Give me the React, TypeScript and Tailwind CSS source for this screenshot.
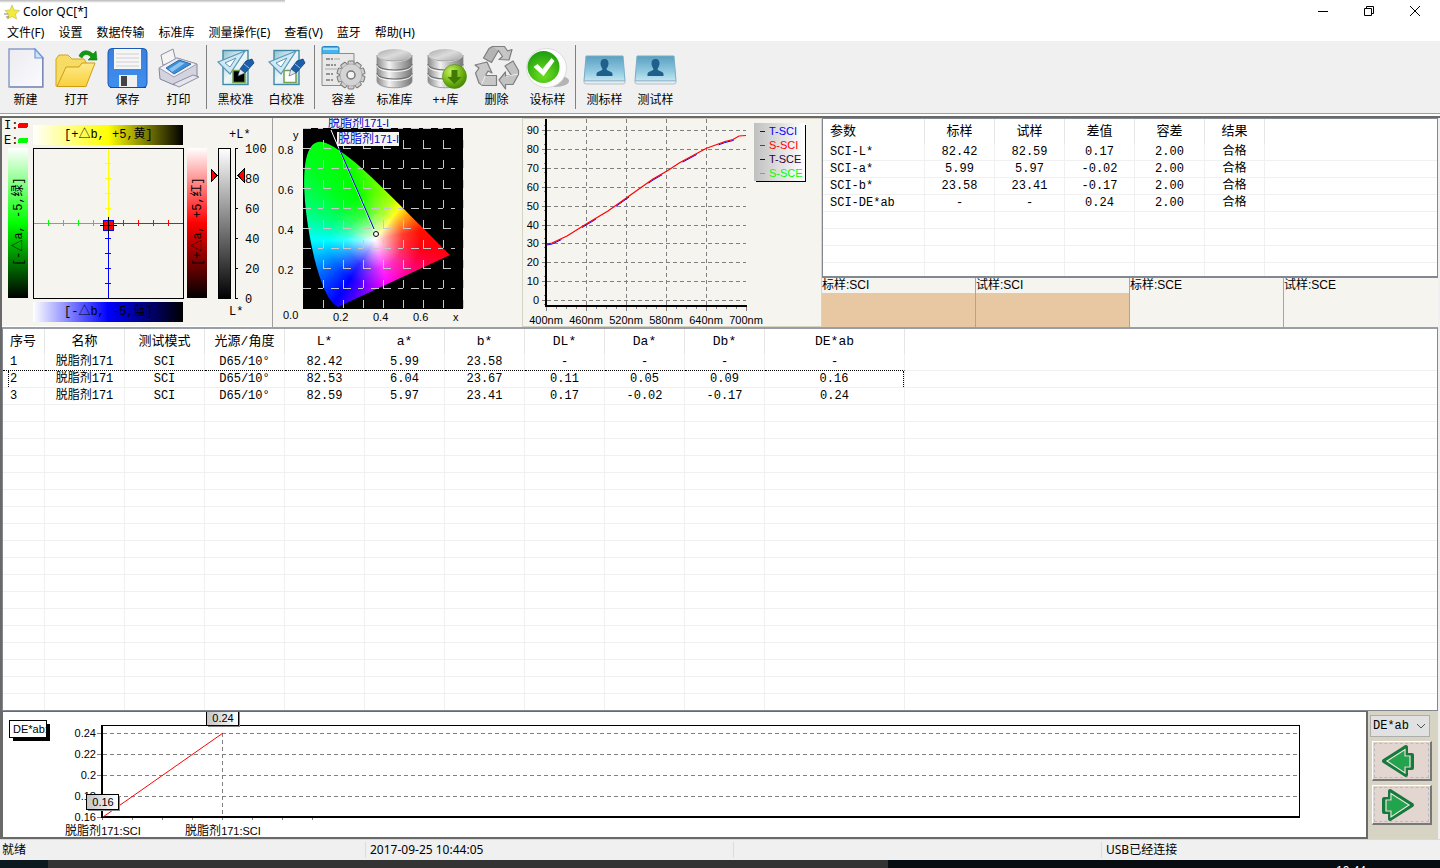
import { useState } from "react";
import type { ReactNode } from "react";

const MENU = ["文件(F)", "设置", "数据传输", "标准库", "测量操作(E)", "查看(V)", "蓝牙", "帮助(H)"];

const PARAM_HEAD = ["参数", "标样", "试样", "差值", "容差", "结果"];
const PARAM_ROWS = [
  ["SCI-L*", "82.42", "82.59", "0.17", "2.00", "合格"],
  ["SCI-a*", "5.99", "5.97", "-0.02", "2.00", "合格"],
  ["SCI-b*", "23.58", "23.41", "-0.17", "2.00", "合格"],
  ["SCI-DE*ab", "-", "-", "0.24", "2.00", "合格"],
];

const DATA_HEAD = ["序号", "名称", "测试模式", "光源/角度", "L*", "a*", "b*", "DL*", "Da*", "Db*", "DE*ab"];
const DATA_ROWS = [
  ["1", "脱脂剂171", "SCI", "D65/10°", "82.42", "5.99", "23.58", "-", "-", "-", "-"],
  ["2", "脱脂剂171", "SCI", "D65/10°", "82.53", "6.04", "23.67", "0.11", "0.05", "0.09", "0.16"],
  ["3", "脱脂剂171", "SCI", "D65/10°", "82.59", "5.97", "23.41", "0.17", "-0.02", "-0.17", "0.24"],
];

// CIE 1931 spectral locus, 380nm to 700nm
const LOCUS = [
  [0.1741, 0.005], [0.1644, 0.0109], [0.144, 0.0297], [0.1241, 0.0578], [0.1096, 0.0868], [0.0913, 0.1327],
  [0.0687, 0.2007], [0.0454, 0.295], [0.0235, 0.4127], [0.0082, 0.5384], [0.0039, 0.6548], [0.0139, 0.7502],
  [0.0389, 0.812], [0.0743, 0.8338], [0.1142, 0.8262], [0.1547, 0.8059], [0.2296, 0.7543], [0.3016, 0.6923],
  [0.3731, 0.6245], [0.4441, 0.5547], [0.5125, 0.4866], [0.5752, 0.4242], [0.627, 0.3725], [0.6915, 0.3083],
  [0.7347, 0.2653],
];

/* ---------- toolbar icons ---------- */

function Icon({ children }: { children: ReactNode }) {
  return (
    <svg viewBox="0 0 48 48" className="size-12 shrink-0" aria-hidden="true">
      {children}
    </svg>
  );
}

function IconDefs() {
  return (
    <svg className="absolute size-0" aria-hidden="true">
      <defs>
        <linearGradient id="paper" x1="0" y1="0" x2="1" y2="1">
          <stop offset="0" stopColor="#ececf0" />
          <stop offset="1" stopColor="#fafaff" />
        </linearGradient>
        <linearGradient id="folder" x1="0" y1="0" x2="0" y2="1">
          <stop offset="0" stopColor="#fdeb8c" />
          <stop offset="1" stopColor="#f9d03c" />
        </linearGradient>
        <linearGradient id="metal" x1="0" y1="0" x2="1" y2="0">
          <stop offset="0" stopColor="#8c8c8c" />
          <stop offset="0.35" stopColor="#f2f2f2" />
          <stop offset="0.6" stopColor="#bdbdbd" />
          <stop offset="1" stopColor="#777" />
        </linearGradient>
        <linearGradient id="lid" x1="0" y1="0" x2="1" y2="1">
          <stop offset="0" stopColor="#a8a8a8" />
          <stop offset="0.5" stopColor="#dcdcdc" />
          <stop offset="1" stopColor="#a0a0a0" />
        </linearGradient>
        <linearGradient id="sheet" x1="0" y1="0" x2="1" y2="1">
          <stop offset="0" stopColor="#8fc0d2" />
          <stop offset="0.5" stopColor="#eef7fa" />
          <stop offset="1" stopColor="#b4d8e2" />
        </linearGradient>
        <linearGradient id="card" x1="0" y1="0" x2="0" y2="1">
          <stop offset="0" stopColor="#5a9fc0" />
          <stop offset="0.6" stopColor="#8fc8e0" />
          <stop offset="1" stopColor="#c2e6f2" />
        </linearGradient>
        <radialGradient id="green" cx="0.5" cy="0.75" r="0.7">
          <stop offset="0" stopColor="#6fe020" />
          <stop offset="1" stopColor="#22a010" />
        </radialGradient>
        <radialGradient id="olive" cx="0.35" cy="0.3" r="0.8">
          <stop offset="0" stopColor="#c8f060" />
          <stop offset="0.6" stopColor="#6cb010" />
          <stop offset="1" stopColor="#3c7a04" />
        </radialGradient>
        <linearGradient id="disk" x1="0" y1="0" x2="0" y2="1">
          <stop offset="0" stopColor="#3a7fdc" />
          <stop offset="1" stopColor="#3f8ff0" />
        </linearGradient>
      </defs>
    </svg>
  );
}

function NewIcon() {
  return (
    <Icon>
      <path d="M7 5h26l8 9v29H7z" fill="url(#paper)" stroke="#8c9cc8" strokeWidth="1.5" />
      <path d="M33 5v9h8z" fill="#cfe4fb" stroke="#6f9ad8" strokeWidth="1.2" />
      <path d="M40.500 14v29H8" fill="none" stroke="#7d86b4" strokeWidth="1" />
    </Icon>
  );
}

function OpenIcon() {
  return (
    <Icon>
      <path d="M3 42V15l3-4h9l4 4h12l2 3v24z" fill="#f7dc64" stroke="#d3a21c" strokeWidth="1" />
      <path d="M4 42.500 13 23h13l3-4h13L33 42.500z" fill="url(#folder)" stroke="#cf9c14" strokeWidth="1" />
      <path d="M26 12c2-6 9-7 14-2l3-3 1 9h-9l3-3c-4-4-7-3-9 1z" fill="#109a10" stroke="#0a7a0a" strokeWidth="0.6" />
    </Icon>
  );
}

function SaveIcon() {
  return (
    <Icon>
      <rect x="4" y="4.500" width="39" height="39" rx="4" fill="url(#disk)" stroke="#1d58b4" />
      <rect x="10" y="5" width="27" height="20" fill="#f6f6f6" />
      <path d="M12 10h23M12 14h23M12 18h23M12 22h23" stroke="#c8c8c8" strokeWidth="0.8" />
      <rect x="15" y="31" width="18" height="12" fill="#f0f0f0" />
      <rect x="17" y="32" width="6" height="10" fill="#444" />
      <path d="M6 43.500h36" stroke="#174a9c" />
    </Icon>
  );
}

function PrintIcon() {
  return (
    <Icon>
      <path d="M6 11 18 5l3 12-13 4z" fill="#f4f4f6" stroke="#8e8e96" />
      <path d="M4 24 22 14l20 6v12L19 41 5 35z" fill="#d4d4e0" stroke="#84849a" />
      <path d="M4 24 22 14l20 6-23 13z" fill="#f0f0f6" stroke="#9c9cac" />
      <path d="m11 24 13-8 12 4-17 10z" fill="#3f8fd8" stroke="#2c6cac" />
      <path d="m14 25 11-7 5 1-13 9z" fill="#8cc4f0" />
      <path d="m18 40 20-9 6 2-20 10z" fill="#e6e6ee" stroke="#8e8ea0" />
    </Icon>
  );
}

function CalibrateIcon({ fill }: { fill: string }) {
  return (
    <Icon>
      <rect x="11" y="6.500" width="25" height="34" fill="url(#sheet)" stroke="#3f8aa4" strokeWidth="1.4" />
      <path d="M6 18 33 7 18 30z" fill="#cfe8f4" stroke="#5a98b8" strokeWidth="1.2" />
      <path d="m13 19 11-5-6 9z" fill="#fff" stroke="#5a98b8" strokeWidth="1" />
      <rect x="21" y="26.500" width="12" height="12" fill={fill} stroke="#76a04c" strokeWidth="1.5" />
      <path d="m34 17 6-2 2 4-9 10-5-4z" fill="#1c5ea8" stroke="#123f78" strokeWidth="0.8" />
      <path d="m28 25 5 4-7 3z" fill="#e8e8e8" stroke="#2a5a90" strokeWidth="0.6" />
      <path d="m32 20 5 4" stroke="#8cc0e8" />
    </Icon>
  );
}

const TEETH = [0, 36, 72, 108, 144, 180, 216, 252, 288, 324];

function ToleranceIcon() {
  return (
    <Icon>
      <rect x="2" y="2.500" width="17" height="9" rx="1.500" fill="#45b4ec" stroke="#2688c0" />
      <rect x="3" y="4" width="15" height="2" fill="#a4e0fb" />
      <path d="M2 9.500h32v32H2z" fill="#e8e8e8" stroke="#8c8c8c" />
      <path d="M6 15h8M6 21h10M6 30h8M6 36h8" stroke="#777" strokeWidth="1.500" strokeDasharray="4 1 2 1" />
      <path d="M14 15h6M5 25h12" stroke="#aaa" />
      {TEETH.map((a) => (
        <rect key={a} x="28" y="17" width="6" height="6" rx="1" fill="#cfcfcf" stroke="#777" transform={`rotate(${a} 31 31)`} />
      ))}
      <circle cx="31" cy="31" r="11" fill="#d4d4d4" stroke="#999" strokeWidth="0.6" />
      <circle cx="31" cy="31" r="4" fill="#f4f4f4" stroke="#777" strokeWidth="1.500" />
    </Icon>
  );
}

function Cylinder() {
  return (
    <>
      <path d="M6 11v26c0 9 35 9 35 0V11z" fill="url(#metal)" stroke="#8a8a8a" strokeWidth="0.8" />
      <path d="M6 20c0 8 35 8 35 0M6 29c0 8 35 8 35 0" fill="none" stroke="#6e6e6e" strokeWidth="1.200" />
      <path d="M6 21.500c0 8 35 8 35 0M6 30.500c0 8 35 8 35 0" fill="none" stroke="#fff" strokeWidth="0.9" />
      <ellipse cx="23.500" cy="11" rx="17.500" ry="6.500" fill="url(#lid)" stroke="#f6f6f6" />
      <path d="M6 11c0 8 35 8 35 0" fill="none" stroke="#888" strokeWidth="0.7" />
    </>
  );
}

function LibraryIcon() {
  return (
    <Icon>
      <Cylinder />
    </Icon>
  );
}

function LibraryAddIcon() {
  return (
    <Icon>
      <Cylinder />
      <circle cx="32.500" cy="32.500" r="12" fill="url(#olive)" stroke="#4c8a08" strokeWidth="0.6" />
      <path d="M29.500 26h6v7h4l-7 7-7-7h4z" fill="#3f7a04" />
    </Icon>
  );
}

function RecycleIcon() {
  return (
    <Icon>
      {/* top arrow folds over and points down to the right */}
      <path d="M10.500 14 16 4.500 19.500 2.500h12L34.500 7l4.500-1.500L36 16l-10-.5 3.500-3-4-6-7 12z" fill="#c6c6c6" />
      <path d="M19.500 2.500 25.500 6.500 18.500 18.500 10.500 14 16 4.500z" fill="#b4b4b4" />
      <path
        d="M10.500 14 16 4.500 19.500 2.500h12L34.500 7l4.500-1.500L36 16l-10-.5 3.500-3-4-6-7 12z"
        fill="none"
        stroke="#7e7e7e"
        strokeWidth="1.200"
        strokeLinejoin="round"
      />
      {/* right arrow points left along the bottom */}
      <path
        d="m32 22 8-5 5.500 9.500v4L40 40.500h-7.500V45L26 36l6.500-8v4l6-.5z"
        fill="#c2c2c2"
        stroke="#7e7e7e"
        strokeWidth="1.200"
        strokeLinejoin="round"
      />
      <path d="M45 30 38 31.500l-5 1" stroke="#eee" />
      {/* left arrow rises from the bottom bar */}
      <path
        d="M23.500 31.500v10H9.500L6 39 2.500 29l3.500-5-4-3 12-3 5 11-4-2-2.500 4.500z"
        fill="#c8c8c8"
        stroke="#7e7e7e"
        strokeWidth="1.200"
        strokeLinejoin="round"
      />
      <path d="m12.500 31.500-4 9" stroke="#eee" />
    </Icon>
  );
}

function CheckIcon() {
  return (
    <Icon>
      <ellipse cx="31" cy="37" rx="14" ry="6" fill="#b4b4b4" />
      <ellipse cx="22.500" cy="24" rx="20" ry="19.500" fill="#fdfdfd" stroke="#dcdcdc" />
      <circle cx="19.500" cy="23" r="16" fill="url(#green)" />
      <path d="m9.500 23 4-3 5 5 9-11 3 3-11 15z" fill="#fff" />
    </Icon>
  );
}

function MeasureIcon() {
  return (
    <Icon>
      <path d="M5 12h37l2 25H3z" fill="url(#card)" stroke="#78aec6" />
      <path d="M3 37h41v2l-2 1H5l-2-1z" fill="#e4eef2" stroke="#a4b4bc" strokeWidth="0.8" />
      <path
        d="M23.500 15c3 0 4 2 4 4.500S26 24 25.500 25c0 2 6 2 6 5v2h-16v-2c0-3 6-3 6-5-.500-1-2-3-2-5.500s1-4.500 4-4.500z"
        fill="#1f5f8c"
      />
    </Icon>
  );
}

const TOOL_GROUPS = [
  [
    { label: "新建", icon: <NewIcon /> },
    { label: "打开", icon: <OpenIcon /> },
    { label: "保存", icon: <SaveIcon /> },
    { label: "打印", icon: <PrintIcon /> },
  ],
  [
    { label: "黑校准", icon: <CalibrateIcon fill="#000" /> },
    { label: "白校准", icon: <CalibrateIcon fill="#fff" /> },
  ],
  [
    { label: "容差", icon: <ToleranceIcon /> },
    { label: "标准库", icon: <LibraryIcon /> },
    { label: "++库", icon: <LibraryAddIcon /> },
    { label: "删除", icon: <RecycleIcon /> },
    { label: "设标样", icon: <CheckIcon /> },
  ],
  [
    { label: "测标样", icon: <MeasureIcon /> },
    { label: "测试样", icon: <MeasureIcon /> },
  ],
];

/* ---------- window chrome ---------- */

function TitleBar() {
  return (
    <header className="flex h-[22px] shrink-0 items-center justify-between bg-white">
      <div className="flex items-center gap-[3px] pt-px pl-1">
        <svg viewBox="0 0 16 16" className="size-4" aria-hidden="true">
          <path d="m8 1 2 5 5.500.500-4 3.500 1 5L8 12.500 3.500 15l1-5L1 6.500 6 6z" fill="#f2ea3c" stroke="#b8b850" strokeWidth="0.6" />
          <path d="M0 10h4M2 13h3" stroke="#666" strokeWidth="0.8" />
        </svg>
        <h1 className="text-[12px] leading-4 font-['Noto_Sans',sans-serif]">Color QC[*]</h1>
      </div>
      <div className="flex h-5">
        <button aria-label="Minimize" className="flex w-[46px] items-center justify-center">
          <svg width="10" height="10" aria-hidden="true"><path d="M0 5.500h10" stroke="#000" /></svg>
        </button>
        <button aria-label="Restore" className="flex w-[46px] items-center justify-center">
          <svg width="10" height="10" fill="none" stroke="#000" aria-hidden="true">
            <path d="M.5 2.500h7v7h-7zM2.500 2.500v-2h7v7h-2" />
          </svg>
        </button>
        <button aria-label="Close" className="mr-[2px] flex w-[46px] items-center justify-center">
          <svg width="10" height="10" aria-hidden="true"><path d="m0 0 10 10M10 0 0 10" stroke="#000" /></svg>
        </button>
      </div>
    </header>
  );
}

function Toolbar() {
  return (
    <div className="flex h-[72px] shrink-0 bg-[#f0f0f0] pt-[3px]">
      {TOOL_GROUPS.map((group, i) => (
        <div key={i} className="flex">
          {i > 0 && <div className="mt-px mr-[3px] ml-[2px] h-16 w-px bg-[#808080]" />}
          {group.map((t) => (
            <button key={t.label} className="flex w-[51px] flex-col items-center text-[12px] leading-4 whitespace-nowrap">
              {t.icon}
              {t.label}
            </button>
          ))}
        </div>
      ))}
    </div>
  );
}

/* ---------- plots ---------- */

const MONO = "font-['Liberation_Mono','Noto_Sans_CJK_SC',monospace]";

function LabPlot() {
  return (
    <svg viewBox="2 118 270 209" className={`h-[209px] w-[270px] text-[12px] ${MONO}`} shapeRendering="crispEdges">
      <defs>
        {[
          ["gy", "#ff0"],
          ["gb", "#00f"],
          ["gg", "#0f0"],
          ["gr", "#f00"],
        ].map(([id, c]) => {
          const v = id === "gg" || id === "gr";
          return (
            <linearGradient key={id} id={id} x1="0" y1="0" x2={v ? 0 : 1} y2={v ? 1 : 0}>
              <stop offset="0" stopColor="#fff" />
              <stop offset="0.5" stopColor={c} />
              <stop offset="1" stopColor="#000" />
            </linearGradient>
          );
        })}
        <linearGradient id="gl" x1="0" y1="0" x2="0" y2="1">
          <stop offset="0" stopColor="#fff" />
          <stop offset="1" stopColor="#000" />
        </linearGradient>
      </defs>
      <text x="4" y="129">I:</text>
      <text x="4" y="144">E:</text>
      <rect x="18" y="123" width="10" height="5" rx="2" fill="#f00" />
      <rect x="18" y="138" width="10" height="5" rx="2" fill="#0f0" />
      <rect x="33" y="125" width="150" height="20" fill="url(#gy)" />
      <rect x="33" y="302" width="150" height="20" fill="url(#gb)" />
      <rect x="8" y="148" width="20" height="150" fill="url(#gg)" />
      <rect x="187" y="148" width="20" height="150" fill="url(#gr)" />
      <text x="64" y="138">[+△b, +5,黄]</text>
      <text x="64" y="315">[-△b, -5,蓝]</text>
      <text transform="translate(22 266) rotate(-90)">[-△a, -5,绿]</text>
      <text transform="translate(201 266) rotate(-90)">[+△a, +5,红]</text>
      <rect x="33.5" y="148.5" width="150" height="150" fill="none" stroke="#000" />
      <path d="M108.500 149v74M105 163.500h6M105 178.500h6M105 193.500h6M105 208.500h6" stroke="#ff0" />
      <path d="M108.500 223v75M105 238.500h6M105 253.500h6M105 268.500h6M105 283.500h6" stroke="#00f" />
      <path d="M34 223.500h74M48.500 220v6M63.500 220v6M78.500 220v6M93.500 220v6" stroke="#0f0" />
      <path d="M109 223.500h74M123.500 220v6M138.500 220v6M153.500 220v6M168.500 220v6" stroke="#f00" />
      <rect x="103.500" y="220.500" width="10" height="10" fill="#f00" stroke="#00f" />
      <path d="M100 225.500h17M108.500 217v17" stroke="#000" />
      <rect x="218.500" y="148.500" width="12" height="150" fill="url(#gl)" stroke="#000" />
      <path d="M238 148.500h-3v150h3M235 178.500h3M235 208.500h3M235 238.500h3M235 268.500h3" fill="none" stroke="#000" />
      <path d="m211 169 6 6.500-6 6.500zM244 169l-6 6.500 6 6.500z" fill="#f00" stroke="#000" />
      <text x="229" y="138">+L*</text>
      <text x="229" y="315">L*</text>
      {[100, 80, 60, 40, 20, 0].map((n, i) => (
        <text key={n} x="245" y={153 + i * 30}>{n}</text>
      ))}
    </svg>
  );
}

// quadratic curve through the midpoints keeps the tongue round
function locusPath() {
  const pts = LOCUS.map(([x, y]) => [303 + 200 * x, 308 - 200 * y]);
  let d = `M${pts[0][0]} ${pts[0][1]}`;
  for (let i = 1; i < pts.length - 1; i++) {
    const [x, y] = pts[i];
    const [nx, ny] = pts[i + 1];
    d += ` Q${x} ${y} ${(x + nx) / 2} ${(y + ny) / 2}`;
  }
  const last = pts[pts.length - 1];
  return `${d} L${last[0]} ${last[1]} Z`;
}

function ChromaticityPlot() {
  return (
    <svg viewBox="272 118 250 209" className="h-[209px] w-[250px] text-[11px]">
      <defs>
        <clipPath id="locus">
          <path d={locusPath()} />
        </clipPath>
      </defs>
      <rect x="303" y="128" width="160" height="181" fill="#000" />
      <g clipPath="url(#locus)">
        <foreignObject x="303" y="128" width="160" height="181">
          <div className="h-full w-full bg-[radial-gradient(circle_at_72px_112px,#ffffff_0px,#ffffff90_14px,#ffffff30_28px,#ffffff00_46px),conic-gradient(from_0deg_at_72px_112px,#60ff00_0deg,#a0ff00_20deg,#ffff00_37deg,#ff9000_54deg,#ff1000_78deg,#ff0010_100deg,#ff0080_130deg,#ff00ff_165deg,#8000ff_190deg,#0000ff_213deg,#0070ff_240deg,#00ffff_270deg,#00ff80_292deg,#00ff20_318deg,#00ff00_338deg,#60ff00_360deg)]" />
        </foreignObject>
      </g>
      <g stroke="#c8c8c8" shapeRendering="crispEdges">
        {[323, 343, 363, 383, 403, 423, 443, 463].map((x) => (
          <path key={x} d={`M${x}.5 128v183`} strokeDasharray="8 12" strokeDashoffset="8" />
        ))}
        {[128, 148, 168, 188, 208, 228, 248, 268, 288].map((y, i) => (
          <path key={y} d={`M303 ${y}.5h152`} strokeDasharray={i % 2 ? "8 12" : "8 7 5 8 8 4"} />
        ))}
      </g>
      <path d="M303 308.500h160" stroke="#000" shapeRendering="crispEdges" />
      <path d="M331 130 375 233" stroke="#fff" />
      <path d="M339 148 374 229" stroke="#0000c8" />
      <circle cx="376" cy="234" r="2.500" fill="#fff" stroke="#000" />
      <text x="328" y="127" fill="#00c"><tspan className="text-[12px]">脱脂剂</tspan>171-I</text>
      <rect x="337" y="132" width="62" height="14" fill="#f5f4ef" />
      <text x="338" y="143" fill="#00c"><tspan className="text-[12px]">脱脂剂</tspan>171-I</text>
      <text x="293" y="139">y</text>
      {["0.8", "0.6", "0.4", "0.2"].map((t, i) => (
        <text key={t} x="278" y={154 + i * 40}>{t}</text>
      ))}
      <text x="283" y="319">0.0</text>
      {["0.2", "0.4", "0.6"].map((t, i) => (
        <text key={t} x={333 + i * 40} y="321">{t}</text>
      ))}
      <text x="453" y="321">x</text>
    </svg>
  );
}

const LEGEND = [
  ["T-SCI", "#0000ff"],
  ["S-SCI", "#ff0000"],
  ["T-SCE", "#300040"],
  ["S-SCE", "#00ff00"],
];

function SpectrumPlot() {
  const curve = "546.500,244 552,243 567,236 587,223.500 608,211 627,197.500 653,179 667,171 680,162.500 706,148.500 725,141.500 733,139.500 739,136 746,135.500";
  return (
    <svg viewBox="522 118 300 209" className="h-[209px] w-[300px] text-[11px]">
      <defs>
        <linearGradient id="legend">
          <stop offset="0" stopColor="#c0c0c0" />
          <stop offset="1" stopColor="#fff" />
        </linearGradient>
      </defs>
      <g stroke="#808080" shapeRendering="crispEdges">
        {[90, 80, 70, 60, 50, 40, 30, 20, 10, 0].map((n, i) => {
          const y = Math.round(130 + i * 18.9);
          return (
            <g key={n}>
              <path d={`M547 ${y}.5h199`} strokeDasharray="4 3" />
              <path d={`M542 ${y}.5h4M544 ${y + 4}.5h2M544 ${y - 5}.5h2`} />
            </g>
          );
        })}
        {[586, 626, 666, 706].map((x) => (
          <path key={x} d={`M${x}.5 119v187`} strokeDasharray="4 3" />
        ))}
        {Array.from({ length: 21 }, (_, i) => (
          <path key={i} d={`M${546 + i * 10}.5 307v${i % 4 ? 2 : 4}`} />
        ))}
      </g>
      <path d="M546 119v188M545 306h202" stroke="#000" strokeWidth="2" shapeRendering="crispEdges" />
      <polyline points={curve} fill="none" stroke="#00f" transform="translate(0 1)" strokeDasharray="16 24" />
      <polyline points={curve} fill="none" stroke="#f00" strokeWidth="1.200" />
      {[90, 80, 70, 60, 50, 40, 30, 20, 10, 0].map((n, i) => (
        <text key={n} x="539" y={Math.round(134 + i * 18.9)} textAnchor="end">{n}</text>
      ))}
      {[400, 460, 520, 580, 640, 700].map((n, i) => (
        <text key={n} x={546 + i * 40} y="324" textAnchor="middle">{n}nm</text>
      ))}
      <rect x="756" y="125" width="50" height="57" fill="#000" />
      <rect x="754" y="123" width="51" height="58" fill="url(#legend)" />
      {LEGEND.map(([t, c], i) => (
        <g key={t} fill={c}>
          <rect x="760" y={131 + i * 14} width="5" height="1" />
          <text x="769" y={135 + i * 14}>{t}</text>
        </g>
      ))}
    </svg>
  );
}

function TrendPlot() {
  return (
    <svg className="block h-full w-full text-[11px]">
      <defs>
        <linearGradient id="tag">
          <stop offset="0" stopColor="#c4c4c4" />
          <stop offset="1" stopColor="#fff" />
        </linearGradient>
      </defs>
      <rect x="9" y="12" width="37" height="17" fill="#000" />
      <rect x="5.500" y="8.500" width="37" height="17" fill="#fff" stroke="#000" />
      <text x="9" y="21">DE*ab:</text>

      {/* plot area, stretches with the window */}
      <svg x="97" y="12" height="94" className="w-[calc(100%-163px)]" shapeRendering="crispEdges">
        <path d="M121.500 9v84" stroke="#808080" strokeDasharray="4 3" />
        {[9, 30, 51, 72].map((y) => (
          <line key={y} x1="2" x2="100%" y1={y + 0.5} y2={y + 0.5} stroke="#808080" strokeDasharray="4 3" />
        ))}
        <line x1="0" x2="100%" y1="1.500" y2="1.500" stroke="#000" />
        <line x1="0" x2="100%" y1="93" y2="93" stroke="#000" strokeWidth="2" />
        <line x1="100%" x2="100%" y1="1" y2="94" stroke="#000" strokeWidth="2" />
        <line x1="1" x2="1" y1="1" y2="94" stroke="#000" strokeWidth="2" />
      </svg>
      <g stroke="#808080" shapeRendering="crispEdges">
        {[21, 42, 63, 84, 105].map((y) => (
          <path key={y} d={`M93 ${y}.5h4`} />
        ))}
        {[0, 1, 2, 3, 4, 5, 6, 7].map((i) => (
          <path key={i} d={`M${98 + i * 30}.5 106v2`} />
        ))}
      </g>
      <path d="m99 105 120-84" stroke="#f00" />
      {["0.24", "0.22", "0.2", "0.18", "0.16"].map((t, i) => (
        <text key={t} x="92" y={25 + i * 21} textAnchor="end">{t}</text>
      ))}
      {[
        { x: 82, y: 82, t: "0.16" },
        { x: 202, y: -2, t: "0.24" },
      ].map((m) => (
        <g key={m.t} transform={`translate(${m.x} ${m.y})`}>
          <rect x="2" y="2" width="32" height="15" fill="#888" />
          <rect x="0.500" y="0.500" width="32" height="15" fill="url(#tag)" stroke="#000" />
          <text x="17" y="12" textAnchor="middle">{m.t}</text>
        </g>
      ))}
      {[99, 219].map((x) => (
        <text key={x} x={x} y="123" textAnchor="middle"><tspan className="text-[12px]">脱脂剂</tspan>171:SCI</text>
      ))}
    </svg>
  );
}

/* ---------- tables ---------- */

type GridProps = {
  label: string;
  head: string[];
  rows: string[][];
  widths: number[];
  blank: number;
  selected?: number;
};

function Grid({ label, head, rows, widths, blank, selected = -1 }: GridProps) {
  const all = [...rows, ...Array.from({ length: blank }, () => head.map(() => ""))];
  return (
    <table aria-label={label} className={`w-full table-fixed border-separate border-spacing-0 text-[12px] ${MONO}`}>
      <colgroup>
        {widths.map((w, i) => (
          <col key={i} style={{ width: w }} />
        ))}
        <col />
      </colgroup>
      <thead>
        <tr className="h-[25px] text-[13px]">
          {head.map((h, i) => (
            <th key={h} className={`border-r border-[#e5e5e5] p-0 font-normal leading-4 ${i === 0 ? "pl-[7px] text-left" : "text-center"}`}>
              {h}
            </th>
          ))}
          <td />
        </tr>
      </thead>
      <tbody>
        {all.map((row, r) => (
          <tr key={r} className="h-[17px]">
            {row.map((cell, c) => (
              <td
                key={c}
                className={`border-r border-b border-r-[#f0f0f0] p-0 leading-4 whitespace-nowrap ${c === 0 ? "pl-[5px] text-left" : "text-center"} ${
                  r === selected - 1 ? "[border-bottom-style:dotted] border-b-black" : "border-b-[#f0f0f0]"
                }`}
              >
                {c === 0 ? (
                  <div className={`h-4 border-l border-dotted pl-px ${r === selected ? "border-black" : "border-transparent"}`}>{cell}</div>
                ) : r === selected && c === head.length - 1 ? (
                  <div className="h-4 border-r border-dotted border-black">{cell}</div>
                ) : (
                  cell
                )}
              </td>
            ))}
            <td className="border-b border-[#f0f0f0]" />
          </tr>
        ))}
      </tbody>
    </table>
  );
}

const SWATCHES = [
  { label: "标样:SCI", fill: "bg-[#e8c8a2]" },
  { label: "试样:SCI", fill: "bg-[#e8c8a2]" },
  { label: "标样:SCE", fill: "bg-[#f5f4ef]" },
  { label: "试样:SCE", fill: "bg-[#f5f4ef]" },
];

function ArrowButton({ label, flip }: { label: string; flip?: boolean }) {
  return (
    <button
      aria-label={label}
      className="ml-[2px] h-10 w-[60px] border-t border-r-2 border-b-2 border-l border-t-white border-r-[#777] border-b-[#777] border-l-white bg-[#e3d6d0] p-px"
    >
      <span className="flex h-full items-center border border-dashed border-[#bbb] pl-1.5">
        <svg width="34" height="34" viewBox="0 0 34 34" className={flip ? "-scale-x-100" : ""} aria-hidden="true">
          <path d="M3 17 25 3v8h6v13h-6v7z" fill="#22a44c" stroke="#157a3c" strokeWidth="4" strokeLinejoin="round" />
          <path d="M6 17 24 5.500V12h5v11h-5v6z" fill="none" stroke="#f0e8e0" strokeWidth="1.200" />
        </svg>
      </span>
    </button>
  );
}

export default function App() {
  const [metric, setMetric] = useState("DE*ab");

  return (
    <div className="flex h-screen flex-col overflow-hidden bg-[#f0f0f0] text-[12px] leading-4 text-black font-['Liberation_Sans','Noto_Sans_CJK_SC',sans-serif]">
      <IconDefs />
      <div className="absolute top-0 left-0 h-[3px] w-[285px] bg-linear-to-b from-[#b8b8b8] to-white" />
      <TitleBar />
      <nav className="flex h-[19px] shrink-0 items-center bg-white pt-[2px] font-['Noto_Sans','Noto_Sans_CJK_SC',sans-serif]">
        {MENU.map((m) => (
          <button key={m} className="px-[7px] whitespace-nowrap">{m}</button>
        ))}
      </nav>
      <Toolbar />
      <div className="h-[5px] shrink-0 border-t border-b-2 border-t-[#a0a0a0] border-b-[#696969] bg-white" />

      <main className="flex min-h-0 flex-1 flex-col border-r-2 border-l-2 border-r-[#f0f0f0] border-l-[#696969]">
        <section className="flex h-[209px] shrink-0 bg-[#f5f4ef]">
          <div className="shrink-0 border-r border-[#a0a0a0] shadow-[inset_0_-1px_#fff]">
            <LabPlot />
          </div>
          <div className="-ml-px shrink-0 border-r border-[#a0a0a0]">
            <ChromaticityPlot />
          </div>
          <div className="-ml-px shrink-0 shadow-[inset_0_0_0_1px_#d8d4c4]">
            <SpectrumPlot />
          </div>
          <div className="flex min-w-0 flex-1 flex-col">
            <div className="h-[160px] shrink-0 overflow-hidden border border-b-2 border-[#828790] bg-white">
              <Grid label="参数" head={PARAM_HEAD} rows={PARAM_ROWS} widths={[102, 70, 70, 70, 70, 60]} blank={4} />
            </div>
            <div className="grid flex-1 grid-cols-4">
              {SWATCHES.map((s) => (
                <div key={s.label} className="flex flex-col border-r border-[#a8a894] last:border-r-0">
                  <span className="text-[12px] leading-[15px]">{s.label}</span>
                  <div className={`flex-1 ${s.fill}`} />
                </div>
              ))}
            </div>
          </div>
        </section>

        <section className="min-h-0 flex-1 overflow-hidden border border-t-2 border-[#828790] border-t-[#9a9ea6] bg-white">
          <Grid
            label="测量数据"
            head={DATA_HEAD}
            rows={DATA_ROWS}
            widths={[42, 80, 80, 80, 80, 80, 80, 80, 80, 80, 140]}
            blank={30}
            selected={1}
          />
        </section>

        <section className="flex h-[128px] shrink-0 bg-[#d8d4c4]">
          <div className="min-w-0 flex-1 border-t border-r-2 border-b-2 border-l border-[#696969] bg-white pl-px">
            <TrendPlot />
          </div>
          <div className="flex w-[70px] shrink-0 flex-col gap-1 pt-1 pl-[2px]">
            <div className="relative h-[22px] w-[60px]">
              <select
                aria-label="DE*ab"
                value={metric}
                onChange={(e) => setMetric(e.target.value)}
                className={`h-full w-full appearance-none border border-[#adadad] bg-[#e1e1e1] pl-[2px] text-[12px] ${MONO}`}
              >
                <option>DE*ab</option>
              </select>
              <svg width="10" height="6" className="pointer-events-none absolute top-2 right-1" aria-hidden="true">
                <path d="m1 1 4 4 4-4" fill="none" stroke="#555" />
              </svg>
            </div>
            <ArrowButton label="上一个" />
            <ArrowButton label="下一个" flip />
          </div>
        </section>
      </main>

      <footer className="grid h-[21px] shrink-0 grid-cols-[366px_368px_368px_1fr] items-center border-t border-[#d8d8d8] bg-[#f0f0f0] font-['Noto_Sans','Noto_Sans_CJK_SC',sans-serif]">
        <span className="border-r border-[#dcdcdc] pl-0.5">就绪</span>
        <span className="border-r border-[#dcdcdc] pl-1">2017-09-25 10:44:05</span>
        <span className="h-4 border-r border-[#dcdcdc]" />
        <span className="pl-1">USB已经连接</span>
      </footer>
      <div className="flex h-2 shrink-0 justify-end overflow-hidden bg-[linear-gradient(90deg,#0c1a20_48px,#333333_48px,#333333_888px,#060c10_888px)] pt-[3px] pr-[74px] text-white">
        <span>10:44</span>
      </div>
    </div>
  );
}
